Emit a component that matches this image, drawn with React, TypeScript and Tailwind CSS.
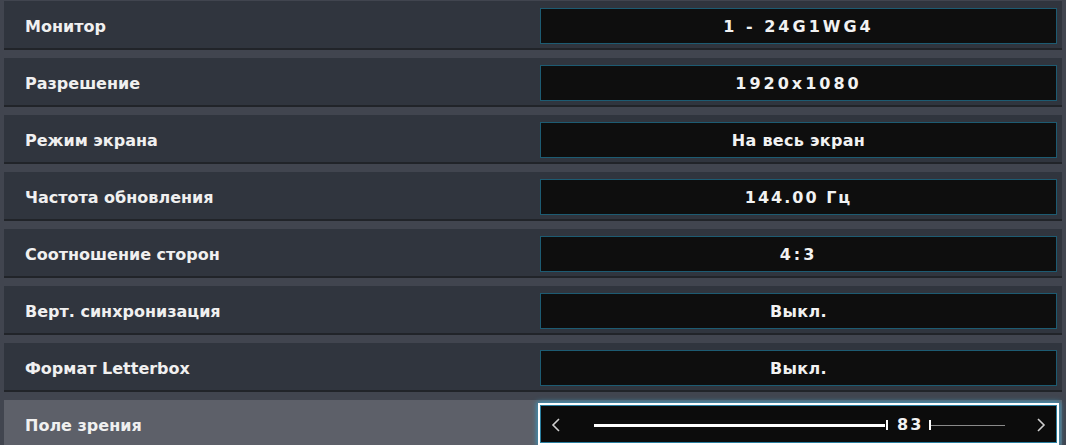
import React from "react";

const rows: { label: string; value: string; cls: string }[] = [
  { label: "Монитор", value: "1 - 24G1WG4", cls: "tracking-[3px]" },
  { label: "Разрешение", value: "1920x1080", cls: "tracking-[3px]" },
  { label: "Режим экрана", value: "На весь экран", cls: "tracking-[0.3px]" },
  { label: "Частота обновления", value: "144.00 Гц", cls: "tracking-[2px]" },
  { label: "Соотношение сторон", value: "4:3", cls: "tracking-[3px]" },
  { label: "Верт. синхронизация", value: "Выкл.", cls: "tracking-[0.3px]" },
  { label: "Формат Letterbox", value: "Выкл.", cls: "tracking-[0.3px]" },
];

const labelFont = { fontFamily: '"DejaVu Sans", "Liberation Sans", sans-serif' };

export default function App() {
  return (
    <div className="h-[445px] w-[1066px] overflow-hidden bg-[#41454f]" style={labelFont}>
      <div className="flex flex-col gap-2 px-1 pt-px">
        {rows.map((r) => (
          <div
            key={r.label}
            className="flex h-[49px] shrink-0 items-start border-b-2 border-[#212429] bg-[#30353e]"
          >
            <div className="flex h-[47px] flex-1 items-center pl-[21px] pt-[5px] text-[16px] font-bold text-[#f0f0f0]">
              {r.label}
            </div>
            <div className="mr-[5px] mt-[7px] flex h-[36px] w-[517px] items-center justify-center border border-[#1d5b72] bg-[#0e0e0e] pt-[2px]">
              <span className={`text-[16px] font-bold text-[#f2f2f2] ${r.cls}`}>{r.value}</span>
            </div>
          </div>
        ))}
        <div className="flex h-[49px] shrink-0 items-start bg-[#5d6069]">
          <div className="flex h-[47px] flex-1 items-center pl-[21px] pt-[5px] text-[16px] font-bold text-[#f0f0f0]">
            Поле зрения
          </div>
          <div className="mr-[3px] mt-[3px] flex h-[42px] w-[521px] items-center border-2 border-white bg-[#0c0c0c] pt-[2px] shadow-[0_0_5px_1px_#3a9cc4,inset_0_0_0_1px_#2a7fa0]">
            <svg width="12" height="16" viewBox="0 0 12 16" className="ml-[10px]">
              <polyline points="9,2 3,8 9,14" fill="none" stroke="#cfcfcf" strokeWidth="1.6" />
            </svg>
            <div className="ml-[32px] h-[3px] w-[291px] bg-white" />
            <div className="ml-px h-[10px] w-[2px] bg-white" />
            <span className="ml-[9px] text-[16px] font-bold tracking-[2px] text-[#f2f2f2]">83</span>
            <div className="ml-[6px] h-[10px] w-[2px] bg-white" />
            <div className="h-px w-[74px] bg-[#8a8a8a]" />
            <div className="flex-1" />
            <svg width="12" height="16" viewBox="0 0 12 16" className="mr-[10px]">
              <polyline points="3,2 9,8 3,14" fill="none" stroke="#cfcfcf" strokeWidth="1.6" />
            </svg>
          </div>
        </div>
      </div>
    </div>
  );
}
